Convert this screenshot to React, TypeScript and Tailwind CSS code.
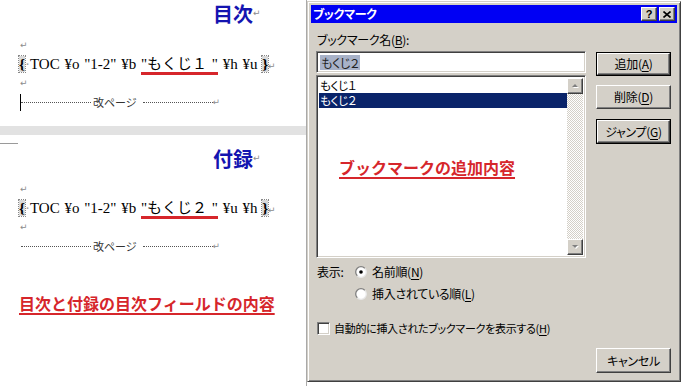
const gothic = "font-['Noto_Sans_CJK_JP','Noto_Sans',sans-serif] [font-feature-settings:'palt']"
const gothicPlain = "font-['Noto_Sans_CJK_JP','Noto_Sans',sans-serif] [font-feature-settings:normal]"

function Ret() {
  return <span className="font-['DejaVu_Sans',sans-serif] text-[9px] leading-none text-[#8c8c8c]">↵</span>
}

function ParaMark() {
  return (
    <div className="h-[19px] pl-[20px] flex items-center">
      <Ret />
    </div>
  )
}

function Heading({ text }: { text: string }) {
  return (
    <div className="h-[22px] pl-[213px] flex items-end">
      <span className={`${gothicPlain} text-[20px] leading-[22px] font-bold text-[#1414b0]`}>{text}</span>
      <span className="pb-[3px]"><Ret /></span>
    </div>
  )
}

function Brace({ ch }: { ch: string }) {
  return <span className="font-bold bg-[#d9d9d9] text-black outline-1 outline-dotted outline-[#888]">{ch}</span>
}

function FieldLine({ name, sw }: { name: string; sw: string }) {
  return (
    <div className="h-[19px] pl-[19px] leading-[19px] whitespace-pre text-[15px] [word-spacing:1px] text-black font-['Liberation_Serif','Noto_Sans_CJK_JP',serif]">
      <Brace ch="{" />
      <span className="text-[#a0a0a0]">·</span>
      <span>TOC ¥o "1-2" ¥b </span>
      <span className="border-b-[3px] border-[#d6262b]">"{name} "</span>
      <span> {sw} </span>
      <Brace ch="}" />
      <Ret />
    </div>
  )
}

function PageBreak({ cursor }: { cursor?: boolean }) {
  return (
    <div className="h-[19px] pl-[20px] flex items-center">
      <div className={`w-px h-[17px] ${cursor ? "bg-black" : "bg-transparent"}`} />
      <div className="w-[70px] border-t border-dotted border-[#555]" />
      <span className={`${gothic} text-[11px] leading-none text-[#333] pl-[2px] pr-[6px]`}>改ページ</span>
      <div className="w-[70px] border-t border-dotted border-[#555]" />
      <Ret />
    </div>
  )
}

function Mn({ k }: { k: string }) {
  return (
    <>
      (<span className="underline underline-offset-2">{k}</span>)
    </>
  )
}

const raised =
  "bg-[#d4d0c8] border border-t-white border-l-white border-r-[#404040] border-b-[#404040] shadow-[inset_-1px_-1px_0_#808080]"
const sunken =
  "bg-white border border-t-[#808080] border-l-[#808080] border-r-white border-b-white shadow-[inset_1px_1px_0_#404040,inset_-1px_-1px_0_#d4d0c8]"

function Button({ children, def, className }: { children: React.ReactNode; def?: boolean; className: string }) {
  if (def) {
    return (
      <div className={`border border-black flex ${className}`}>
        <div className={`flex-1 flex items-center justify-center ${raised}`}>{children}</div>
      </div>
    )
  }
  return <div className={`flex items-center justify-center ${raised} ${className}`}>{children}</div>
}

function Arrow({ up }: { up?: boolean }) {
  return (
    <div className={`w-[16px] h-[16px] flex items-center justify-center ${raised}`}>
      <svg width="9" height="6" viewBox="0 0 9 6">
        {up ? (
          <>
            <polygon points="2,5 5,2 8,5" fill="#fff" />
            <polygon points="1,4 4,1 7,4" fill="#808080" />
          </>
        ) : (
          <>
            <polygon points="2,2 8,2 5,5" fill="#fff" />
            <polygon points="1,1 7,1 4,4" fill="#808080" />
          </>
        )}
      </svg>
    </div>
  )
}

function Radio({ checked }: { checked?: boolean }) {
  const id = checked ? "rg1" : "rg2"
  return (
    <svg width="12" height="12" viewBox="0 0 12 12">
      <defs>
        <linearGradient id={id} x1="0" y1="0" x2="1" y2="1">
          <stop offset="0.45" stopColor="#808080" />
          <stop offset="0.55" stopColor="#e8e8e8" />
        </linearGradient>
      </defs>
      <circle cx="6" cy="6" r="5.3" fill="#fff" stroke={`url(#${id})`} strokeWidth="1.3" />
      {checked && <circle cx="6" cy="6" r="1.8" fill="#000" />}
    </svg>
  )
}

export default function App() {
  return (
    <div className="w-[681px] h-[386px] flex bg-white overflow-hidden">
      {/* document */}
      <div className="w-[307px] h-full shrink-0 flex flex-col border-r border-[#a9a9a9]">
        <div className="h-[126px] pt-[3px] shrink-0">
          <Heading text="目次" />
          <div className="mt-[11px]">
            <ParaMark />
            <FieldLine name="もくじ１" sw="¥h ¥u" />
            <ParaMark />
            <PageBreak cursor />
          </div>
        </div>
        <div className="h-[9px] shrink-0 bg-[#e2e2e2]" />
        <div className="pt-[8px]">
          <div className="w-[18px] h-px bg-[#9a9a9a]" />
          <div className="mt-[4px]">
            <Heading text="付録" />
          </div>
          <div className="mt-[10px]">
            <ParaMark />
            <FieldLine name="もくじ２" sw="¥u ¥h" />
            <ParaMark />
            <PageBreak />
          </div>
          <div className={`${gothicPlain} mt-[37px] pl-[19px] text-[16px] leading-[20px] font-bold text-[#d6262b]`}>
            <span className="underline underline-offset-[3px] decoration-2">目次と付録の目次フィールドの内容</span>
          </div>
        </div>
      </div>

      {/* dialog */}
      <div
        className={`${gothic} self-start mt-[1px] w-[374px] h-[381px] shrink-0 flex flex-col p-[3px] bg-[#d4d0c8] border border-t-[#d4d0c8] border-l-[#d4d0c8] border-r-[#404040] border-b-[#404040] shadow-[inset_1px_1px_0_#fff,inset_-1px_-1px_0_#808080] text-[12px] tracking-[-0.3px] text-black`}
      >
        <div className="h-[18px] shrink-0 bg-[#0000f4] flex items-center pl-[2px] pr-[2px]">
          <span className="text-white font-bold text-[12px] leading-none">ブックマーク</span>
          <div className="ml-auto flex gap-[2px]">
            <div className={`w-[16px] h-[14px] flex items-center justify-center ${raised}`}>
              <span className="font-['Liberation_Sans',sans-serif] font-bold text-[11px] leading-none">?</span>
            </div>
            <div className={`w-[16px] h-[14px] flex items-center justify-center ${raised}`}>
              <svg width="8" height="7" viewBox="0 0 8 7">
                <path d="M0.5 0.5 L7.5 6.5 M7.5 0.5 L0.5 6.5" stroke="#000" strokeWidth="1.6" />
              </svg>
            </div>
          </div>
        </div>

        <div className="flex-1 flex pl-[5px] pr-[6px] pt-[10px] pb-[5px]">
          <div className="w-[270px] flex flex-col">
            <div className="h-[14px] leading-[14px] pl-[1px]">
              ブックマーク名<Mn k="B" />:
            </div>
            <div className={`mt-[4px] h-[22px] flex items-center pl-[3px] ${sunken}`}>
              <span className="bg-[#a8b2c8] text-[#222] leading-[15px] px-[1px]">もくじ２</span>
            </div>
            <div className={`relative mt-[2px] h-[183px] flex p-[2px] ${sunken}`}>
              <div className="flex-1 flex flex-col text-[11.5px]">
                <div className="h-[15px] leading-[15px] pl-[1px] overflow-hidden">もくじ１</div>
                <div className="h-[15px] leading-[15px] pl-[1px] overflow-hidden bg-[#0a246a] text-white">もくじ２</div>
              </div>
              <div className="w-[16px] flex flex-col">
                <Arrow up />
                <div className="flex-1 bg-[repeating-conic-gradient(#d4d0c8_0_25%,#ffffff_0_50%)] bg-[length:2px_2px]" />
                <Arrow />
              </div>
              <div className={`${gothicPlain} absolute left-[22px] top-[81px] text-[16px] leading-[20px] tracking-normal font-bold text-[#d6262b]`}>
                <span className="underline underline-offset-[3px] decoration-2">ブックマークの追加内容</span>
              </div>
            </div>
            <div className="mt-[6px] h-[16px] flex items-center pl-[1px]">
              <span className="w-[38px]">表示:</span>
              <Radio checked />
              <span className="ml-[5px]">
                名前順<Mn k="N" />
              </span>
            </div>
            <div className="mt-[6px] h-[16px] flex items-center pl-[39px]">
              <Radio />
              <span className="ml-[5px]">
                挿入されている順<Mn k="L" />
              </span>
            </div>
            <div className="mt-[18px] h-[16px] flex items-center pl-[1px]">
              <div className={`w-[13px] h-[13px] ${sunken}`} />
              <span className="ml-[4px] text-[11px] tracking-[-0.3px]">
                自動的に挿入されたブックマークを表示する<Mn k="H" />
              </span>
            </div>
          </div>

          <div className="ml-[10px] w-[75px] flex flex-col pt-[19px]">
            <Button def className="h-[24px]">
              追加<Mn k="A" />
            </Button>
            <Button className="mt-[9px] h-[24px]">
              削除<Mn k="D" />
            </Button>
            <Button def className="mt-[10px] h-[25px]">
              ジャンプ<Mn k="G" />
            </Button>
            <Button className="mt-auto h-[25px]">キャンセル</Button>
          </div>
        </div>
      </div>
    </div>
  )
}
